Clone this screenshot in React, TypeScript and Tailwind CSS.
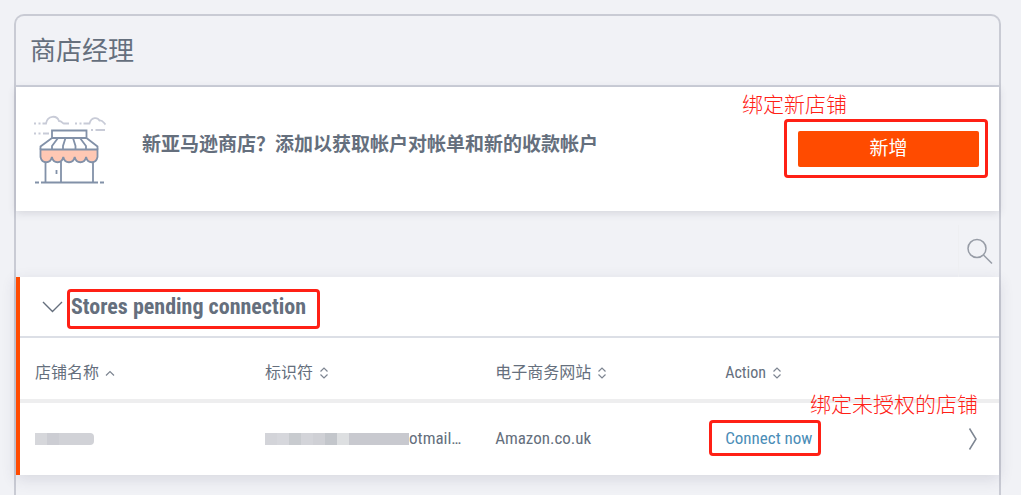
import React from 'react'

const columns = [
    { title: '店铺名称', sort: 'asc' },
    { title: '标识符', sort: 'none' },
    { title: '电子商务网站', sort: 'none' },
    { title: 'Action', sort: 'none' },
]

// shades of the blocks that hide the start of the identifier
const maskShades = ['bg-[#d3d4d9]', 'bg-[#d6d7dc]', 'bg-[#c8cbcf]', 'bg-[#d3d4d9]', 'bg-[#cfd0d5]', 'bg-[#c3c6cb]', 'bg-[#dddfe1]']

function StoreIcon() {
    return (
        <svg className="h-[72px] w-[74px] shrink-0" viewBox="0 0 74 72" fill="none" stroke="#8291a8" strokeWidth="1.8" aria-hidden="true">
            <g stroke="#c8cbd7" strokeWidth="1.8">
                <path d="M2 8.500h2M6.500 8.500h2M10.500 8.500h3.500c1.500-8.500 11-8.500 13-2.500 3 0 3.500 2.500 5 2.500h5M43 8.500h2M47.500 8.500h2M51.500 8.500h6c2-7.500 8.500-6 10-3 3-.5 4 2 6 4" />
                <path d="M2 18.500h2M6.500 18.500h2M11 18.500h6M59 15h2M63.500 15H73" />
            </g>
            <path d="M8.500 34.500h57V42c-1.500 7-9.900 7-11.400 0-1.500 7-9.900 7-11.400 0-1.500 7-9.900 7-11.400 0-1.500 7-9.900 7-11.400 0-1.500 7-9.900 7-11.400 0z" fill="#ffc8b4" />
            <path d="M20 15.500h34.500V23H20zM20 23L8.500 31.500v3M65.500 34.500v-3L54.500 23" />
            <path d="M26 23l-6 8v3M33.500 23L31 31v3M41 23l2.500 8v3M48 23l6 8v3" />
            <path d="M13.500 47v20.500M29 47v20.500M61 47v20.500" />
            <path d="M9 67.500h57M3 67.500h4M68 67.500h4M24.500 55v4" />
        </svg>
    )
}

function SortIcon({ sort }: { sort: string }) {
    return (
        <svg className="h-3 w-[10px]" viewBox="0 0 10 12" fill="none" stroke="#7d8591" strokeWidth="1.2" aria-hidden="true">
            {sort === 'asc' ? <path d="M1 8.500l4-4 4 4" /> : <path d="M1.500 4.500L5 1l3.500 3.500M1.500 7.500L5 11l3.500-3.500" />}
        </svg>
    )
}

export default function App() {
    return (
        <div className="flex min-h-screen flex-col bg-[#f1f2f6] pt-[14px] pr-5 pl-[14px] font-['Roboto_Condensed','Liberation_Sans_Narrow','Noto_Sans_CJK_SC',sans-serif] text-[#656f7d]">
            <main className="flex-1 rounded-t-[10px] border-2 border-b-0 border-[#c9cbd4]">
                <header className="border-b-2 border-[#cdd0da] px-[14px] pt-[15px] pb-[14px]">
                    <h1 className="text-[26px] leading-10">商店经理</h1>
                </header>

                <section className="flex items-center justify-between bg-white py-6 pr-5 pl-4 shadow-[0_2px_8px_rgba(60,60,90,0.16)]">
                    <div className="flex items-center pt-1">
                        <StoreIcon />
                        <p className="mb-3 ml-9 text-[19px] font-bold">新亚马逊商店？添加以获取帐户对帐单和新的收款帐户</p>
                    </div>
                    <div className="relative">
                        <button className="block h-9 w-[181px] rounded-xs bg-[#ff4b00] text-[19px] leading-9 text-white">新增</button>
                        <span className="pointer-events-none absolute -top-3 -right-[9px] -bottom-[11px] -left-[14px] rounded-sm border-3 border-[#ff2015]" />
                        <span className="absolute -top-10 -left-14 text-[21px] leading-7 font-light whitespace-nowrap text-[#ff2015]">绑定新店铺</span>
                    </div>
                </section>

                <div className="flex h-[66px] justify-end pt-[14px]">
                    <button aria-label="Search" className="border-l border-[#eeeff2] px-[6px]">
                        <svg className="h-7 w-7" viewBox="0 0 28 28" fill="none" stroke="#979ca6" strokeWidth="1.5" aria-hidden="true">
                            <circle cx="12" cy="11.500" r="9" />
                            <path d="M18.500 18l8.500 8.500" />
                        </svg>
                    </button>
                </div>

                <section className="border-l-4 border-[#ff4b00] bg-white shadow-[0_4px_14px_rgba(60,60,90,0.14)]">
                    <div className="flex h-[61px] items-center border-b-2 border-[#dcdfe6] pl-[21px]">
                        <button aria-label="Collapse" className="mr-2">
                            <svg className="h-[14px] w-[22px]" viewBox="0 0 22 14" fill="none" stroke="#656f7d" strokeWidth="1.4" aria-hidden="true">
                                <path d="M2 2l9.500 9.500L21 2" />
                            </svg>
                        </button>
                        <h2 className="relative text-[22px] leading-7 font-bold">
                            Stores pending connection
                            <span className="pointer-events-none absolute -top-1 -right-[14px] -bottom-2 -left-1 rounded-sm border-3 border-[#ff2015]" />
                        </h2>
                    </div>

                    <table className="w-full table-fixed text-left">
                        <thead>
                            <tr className="h-[63px] border-b-4 border-[#eeeeef]">
                                {columns.map((column) => (
                                    <th key={column.title} className="w-[23.5%] pt-2 pl-[15px] font-normal">
                                        <button className="flex items-center gap-[6px] text-base">
                                            {column.title}
                                            <SortIcon sort={column.sort} />
                                        </button>
                                    </th>
                                ))}
                                <th aria-label="Open" />
                            </tr>
                        </thead>
                        <tbody>
                            <tr className="h-[74px] text-[17px]">
                                <td className="pl-[15px]">
                                    <div className="flex h-3 w-[59px] overflow-hidden rounded-r-sm bg-[#d1d2d7]">
                                        <span className="w-3 bg-[#d6d7db]" />
                                        <span className="w-3 bg-[#cccdd3]" />
                                    </div>
                                </td>
                                <td className="pl-[15px]">
                                    <div className="flex items-center">
                                        {maskShades.map((shade, i) => (
                                            <span key={i} className={`h-3 w-3 ${shade}`} />
                                        ))}
                                        <span className="h-3 w-[60px] bg-[#c8c9cf]" />
                                        <span>otmail…</span>
                                    </div>
                                </td>
                                <td className="pl-[15px]">Amazon.co.uk</td>
                                <td className="pl-[15px]">
                                    <a href="#connect" className="relative text-[#4a8db7]">
                                        Connect now
                                        <span className="pointer-events-none absolute -top-2 -right-[9px] -bottom-2 -left-4 rounded-sm border-3 border-[#ff2015]" />
                                    </a>
                                </td>
                                <td className="relative pr-[21px]">
                                    <button aria-label="Open store" className="ml-auto block">
                                        <svg className="h-6 w-[10px]" viewBox="0 0 10 24" fill="none" stroke="#7d8591" strokeWidth="1.5" aria-hidden="true">
                                            <path d="M1.500 1.500L8 12 1.500 22.500" />
                                        </svg>
                                    </button>
                                    <span className="absolute -top-3 right-[21px] text-[21px] leading-7 font-light whitespace-nowrap text-[#ff2015]">绑定未授权的店铺</span>
                                </td>
                            </tr>
                        </tbody>
                    </table>
                </section>
            </main>
        </div>
    )
}
